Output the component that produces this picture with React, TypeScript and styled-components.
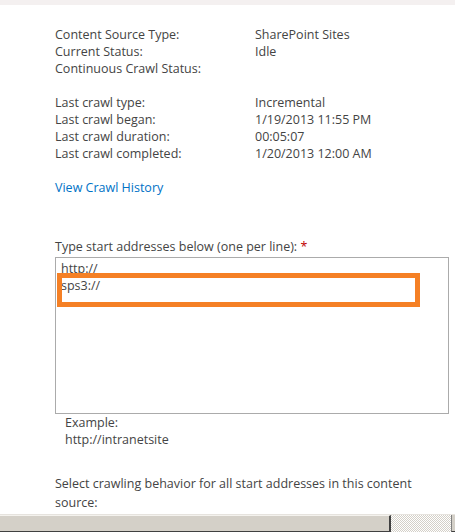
import { Fragment } from "react";
import styled, { createGlobalStyle } from "styled-components";

const GlobalStyle = createGlobalStyle`
  html, body {
    margin: 0;
    padding: 0;
    background: #ffffff;
    overflow: hidden;
  }
  body {
    font-family: "Open Sans", "Noto Sans", "DejaVu Sans", sans-serif;
    color: #444444;
  }
`;

const Page = styled.div`
  display: flex;
  flex-direction: column;
  width: 455px;
  height: 532px;
`;

const TopStrip = styled.div`
  height: 5px;
  background: #f4f0f0;
  flex-shrink: 0;
`;

const Content = styled.div`
  flex: 1;
  padding: 21px 0 0 55px;
  font-size: 12.5px;
  line-height: 17px;
`;

const InfoGrid = styled.div`
  display: grid;
  grid-template-columns: 200px 1fr;
`;

const Cell = styled.span`
  white-space: nowrap;
`;

const Gap = styled.div`
  grid-column: 1 / span 2;
  height: 17px;
`;

const HistoryLink = styled.a`
  display: block;
  margin-top: 17px;
  color: #0072c6;
  text-decoration: none;
  cursor: pointer;
`;

const FieldLabel = styled.div`
  margin-top: 42px;
`;

const Required = styled.span`
  color: #bf0000;
`;

const AddressBox = styled.div`
  position: relative;
  margin-top: 2px;
  width: 387px;
  height: 153px;
  border: 1px solid #ababab;
  padding: 2px 0 0 5px;
`;

const AddressLine = styled.div`
  line-height: 17px;
`;

const Highlight = styled.div`
  position: absolute;
  left: 1px;
  top: 15px;
  width: 353px;
  height: 24px;
  border: 5px solid #f58025;
`;

const Example = styled.div`
  padding-left: 10px;
`;

const Behavior = styled.div`
  margin-top: 26px;
  line-height: 19px;
`;

const ScrollBar = styled.div`
  display: flex;
  height: 17px;
  flex-shrink: 0;
  border-top: 1px solid #e6e3de;
  background-color: #ece9e4;
  background-image: repeating-conic-gradient(#d4d0c8 0% 25%, #ffffff 0% 50%);
  background-size: 2px 2px;
`;

const Thumb = styled.div`
  width: 391px;
  background: #d4d0c8;
  border-top: 1px solid #f4f2ee;
  border-right: 2px solid #404040;
  border-bottom: 1px solid #404040;
  box-sizing: border-box;
`;

const Track = styled.div`
  flex: 1;
`;

const ArrowButton = styled.div`
  width: 4px;
  background: #d4d0c8;
  border-left: 1px solid #808080;
  border-bottom: 1px solid #404040;
  box-sizing: border-box;
`;

const rows: [string, string][] = [
  ["Content Source Type:", "SharePoint Sites"],
  ["Current Status:", "Idle"],
  ["Continuous Crawl Status:", ""],
];

const crawlRows: [string, string][] = [
  ["Last crawl type:", "Incremental"],
  ["Last crawl began:", "1/19/2013 11:55 PM"],
  ["Last crawl duration:", "00:05:07"],
  ["Last crawl completed:", "1/20/2013 12:00 AM"],
];

function InfoRows({ items }: { items: [string, string][] }) {
  return (
    <>
      {items.map(([label, value]) => (
        <Fragment key={label}>
          <Cell>{label}</Cell>
          <Cell>{value}</Cell>
        </Fragment>
      ))}
    </>
  );
}

export default function App() {
  return (
    <Page>
      <GlobalStyle />
      <TopStrip />
      <Content>
        <InfoGrid>
          <InfoRows items={rows} />
          <Gap />
          <InfoRows items={crawlRows} />
        </InfoGrid>
        <HistoryLink>View Crawl History</HistoryLink>
        <FieldLabel>
          Type start addresses below (one per line): <Required>*</Required>
        </FieldLabel>
        <AddressBox>
          <AddressLine>http://</AddressLine>
          <AddressLine>sps3://</AddressLine>
          <Highlight />
        </AddressBox>
        <Example>
          Example:
          <br />
          http://intranetsite
        </Example>
        <Behavior>
          Select crawling behavior for all start addresses in this content
          <br />
          source:
        </Behavior>
      </Content>
      <ScrollBar>
        <Thumb />
        <Track />
        <ArrowButton />
      </ScrollBar>
    </Page>
  );
}
